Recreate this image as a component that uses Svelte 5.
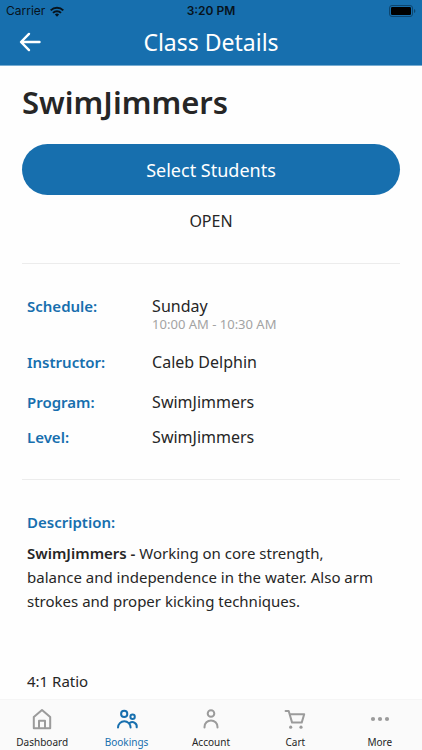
<script>
  const details = [
    { label: 'Schedule:', value: 'Sunday', note: '10:00 AM - 10:30 AM' },
    { label: 'Instructor:', value: 'Caleb Delphin' },
    { label: 'Program:', value: 'SwimJimmers', tight: true },
    { label: 'Level:', value: 'SwimJimmers', tight: true },
  ];
  const tabs = [
    { name: 'Dashboard', icon: 'home' },
    { name: 'Bookings', icon: 'people', active: true },
    { name: 'Account', icon: 'person' },
    { name: 'Cart', icon: 'cart' },
    { name: 'More', icon: 'more' },
  ];
</script>

<div class="screen">
  <header>
    <div class="status">
      <div class="carrier">
        <span>Carrier</span>
        <svg width="14" height="11" viewBox="0 0 14 11" aria-hidden="true">
          <g fill="none" stroke="#07131c" stroke-width="2">
            <path d="M.7 4.4a8.9 8.9 0 0 1 12.6 0" />
            <path d="M3 6.9a5.7 5.7 0 0 1 8 0" />
          </g>
          <path d="M4.9 8.5a3 3 0 0 1 4.2 0L7 10.7z" fill="#07131c" />
        </svg>
      </div>
      <strong>3:20 PM</strong>
      <div class="battery">
        <svg width="27" height="12" viewBox="0 0 27 12" aria-hidden="true">
          <rect x=".5" y=".5" width="23" height="11" rx="2.5" fill="none" stroke="#0d466f" />
          <rect x="2" y="2" width="20" height="8" rx="1.2" fill="#000" />
          <path d="M25 4v4q1.4-.6 1.4-2T25 4z" fill="#0d466f" />
        </svg>
      </div>
    </div>
    <div class="bar">
      <button class="back" aria-label="Back">
        <svg width="22" height="20" viewBox="0 0 22 20" aria-hidden="true">
          <path d="M20.5 10H2.4M10 1.9 2 10l8 8.1" fill="none" stroke="#fff" stroke-width="2.4" stroke-linecap="round" stroke-linejoin="round" />
        </svg>
      </button>
      <span class="heading">Class Details</span>
    </div>
  </header>

  <main>
    <h1>SwimJimmers</h1>
    <button class="select">Select Students</button>
    <p class="state">OPEN</p>

    <dl>
      {#each details as d}
        <div class="row" class:tight={d.tight}>
          <dt>{d.label}</dt>
          <dd>
            {d.value}
            {#if d.note}<small>{d.note}</small>{/if}
          </dd>
        </div>
      {/each}
    </dl>

    <section>
      <h2>Description:</h2>
      <p><b>SwimJimmers -</b> Working on core strength, balance and independence in the water. Also arm strokes and proper kicking techniques.</p>
      <p class="ratio">4:1 Ratio</p>
    </section>
  </main>

  <nav>
    {#each tabs as t}
      <a href="#{t.icon}" class:active={t.active}>
        <svg width="24" height="24" viewBox="0 0 24 24" fill="none" stroke="currentColor" stroke-width="2" stroke-linecap="round" stroke-linejoin="round" aria-hidden="true">
          {#if t.icon === 'home'}
            <path d="M3.8 10 12 3l8.2 7v11.200H3.800z" />
            <path d="M9 21v-7.200h6V21" />
          {:else if t.icon === 'people'}
            <circle cx="9.200" cy="6.900" r="3.100" />
            <circle cx="17.600" cy="9.700" r="2.200" />
            <path d="M3 20.600a6.300 6.300 0 0 1 12.600 0M14.800 15.800a4.500 4.500 0 0 1 6.900 4.500" />
          {:else if t.icon === 'person'}
            <circle cx="12" cy="6.500" r="3.300" />
            <path d="M5.500 20.600v-.7a6.500 6.500 0 0 1 13 0v.7" />
          {:else if t.icon === 'cart'}
            <path d="M2.600 4h3.100l3.400 11.600h9.600l2.500-8.400H6.700" />
            <g fill="currentColor" stroke="none">
              <circle cx="7.700" cy="20.200" r="1.600" />
              <circle cx="18" cy="20.200" r="1.600" />
            </g>
          {:else}
            <g fill="currentColor" stroke="none">
              <circle cx="5" cy="12" r="2.100" />
              <circle cx="12" cy="12" r="2.100" />
              <circle cx="19" cy="12" r="2.100" />
            </g>
          {/if}
        </svg>
        <span>{t.name}</span>
      </a>
    {/each}
  </nav>
</div>

<style>
  .screen {
    min-height: 100vh;
    display: flex;
    flex-direction: column;
    background: #fefefe;
    color: #262626;
    font-family: 'Noto Sans', 'Open Sans', sans-serif;
    font-size: 15px;
    line-height: 20px;
  }
  button {
    border: 0;
    padding: 0;
    font: inherit;
    color: #fff;
    cursor: pointer;
  }
  header {
    background: #176fae;
    border-bottom: 1px solid #77acd1;
  }
  .status {
    display: grid;
    grid-template-columns: 1fr auto 1fr;
    align-items: center;
    height: 22px;
    padding: 0 6px;
    color: #07131c;
    font: 12px/22px Inter, sans-serif;
  }
  .status strong {
    font-weight: 600;
  }
  .carrier {
    display: flex;
    align-items: center;
    gap: 5px;
  }
  .battery {
    display: flex;
    justify-content: flex-end;
  }
  .bar {
    display: grid;
    grid-template-columns: 44px 1fr 44px;
    align-items: center;
    padding: 0 8px 3px;
  }
  .back {
    display: grid;
    place-items: center;
    height: 40px;
    background: none;
  }
  .heading {
    text-align: center;
    color: #fff;
    font-size: 23px;
    line-height: 40px;
  }
  main {
    flex: 1;
    padding: 16px 22px 0;
  }
  h1 {
    margin: 0 0 22px;
    font-size: 31px;
    line-height: 40px;
    font-weight: 600;
  }
  .select {
    display: block;
    width: 100%;
    height: 51px;
    border-radius: 26px;
    background: #176fae;
    font-size: 18px;
  }
  .state {
    margin: 16px 0 32px;
    text-align: center;
    font-size: 16px;
  }
  dl {
    margin: 0;
    padding: 32px 5px;
    border: solid #ececec;
    border-width: 1px 0;
    display: flex;
    flex-direction: column;
    gap: 20px;
  }
  .row {
    display: grid;
    grid-template-columns: 34% 1fr;
  }
  .row.tight + .row.tight {
    margin-top: -5px;
  }
  dt,
  h2 {
    margin: 0;
    color: #176fae;
    font-size: 15px;
    font-weight: 600;
  }
  dd {
    margin: 0;
    font-size: 16px;
  }
  small {
    display: block;
    color: #a3a3a3;
    font-size: 13px;
    line-height: 16px;
  }
  section {
    padding: 32px 21px 0 5px;
  }
  h2 {
    margin-bottom: 9px;
  }
  section p {
    margin: 0;
    line-height: 24px;
  }
  b {
    font-weight: 600;
  }
  section .ratio {
    margin-top: 56px;
  }
  nav {
    position: sticky;
    bottom: 0;
    display: grid;
    grid-template-columns: repeat(5, 1fr);
    height: 50px;
    background: #fafafa;
    box-shadow: 0 -1px 0 #f5f5f5;
  }
  nav a {
    display: flex;
    flex-direction: column;
    align-items: center;
    padding-top: 7px;
    color: #9b9b9b;
    text-decoration: none;
    font-size: 10px;
    line-height: 14px;
  }
  nav span {
    color: #262626;
    padding-top: 4px;
  }
  nav .active,
  .active span {
    color: #176fae;
  }
</style>
